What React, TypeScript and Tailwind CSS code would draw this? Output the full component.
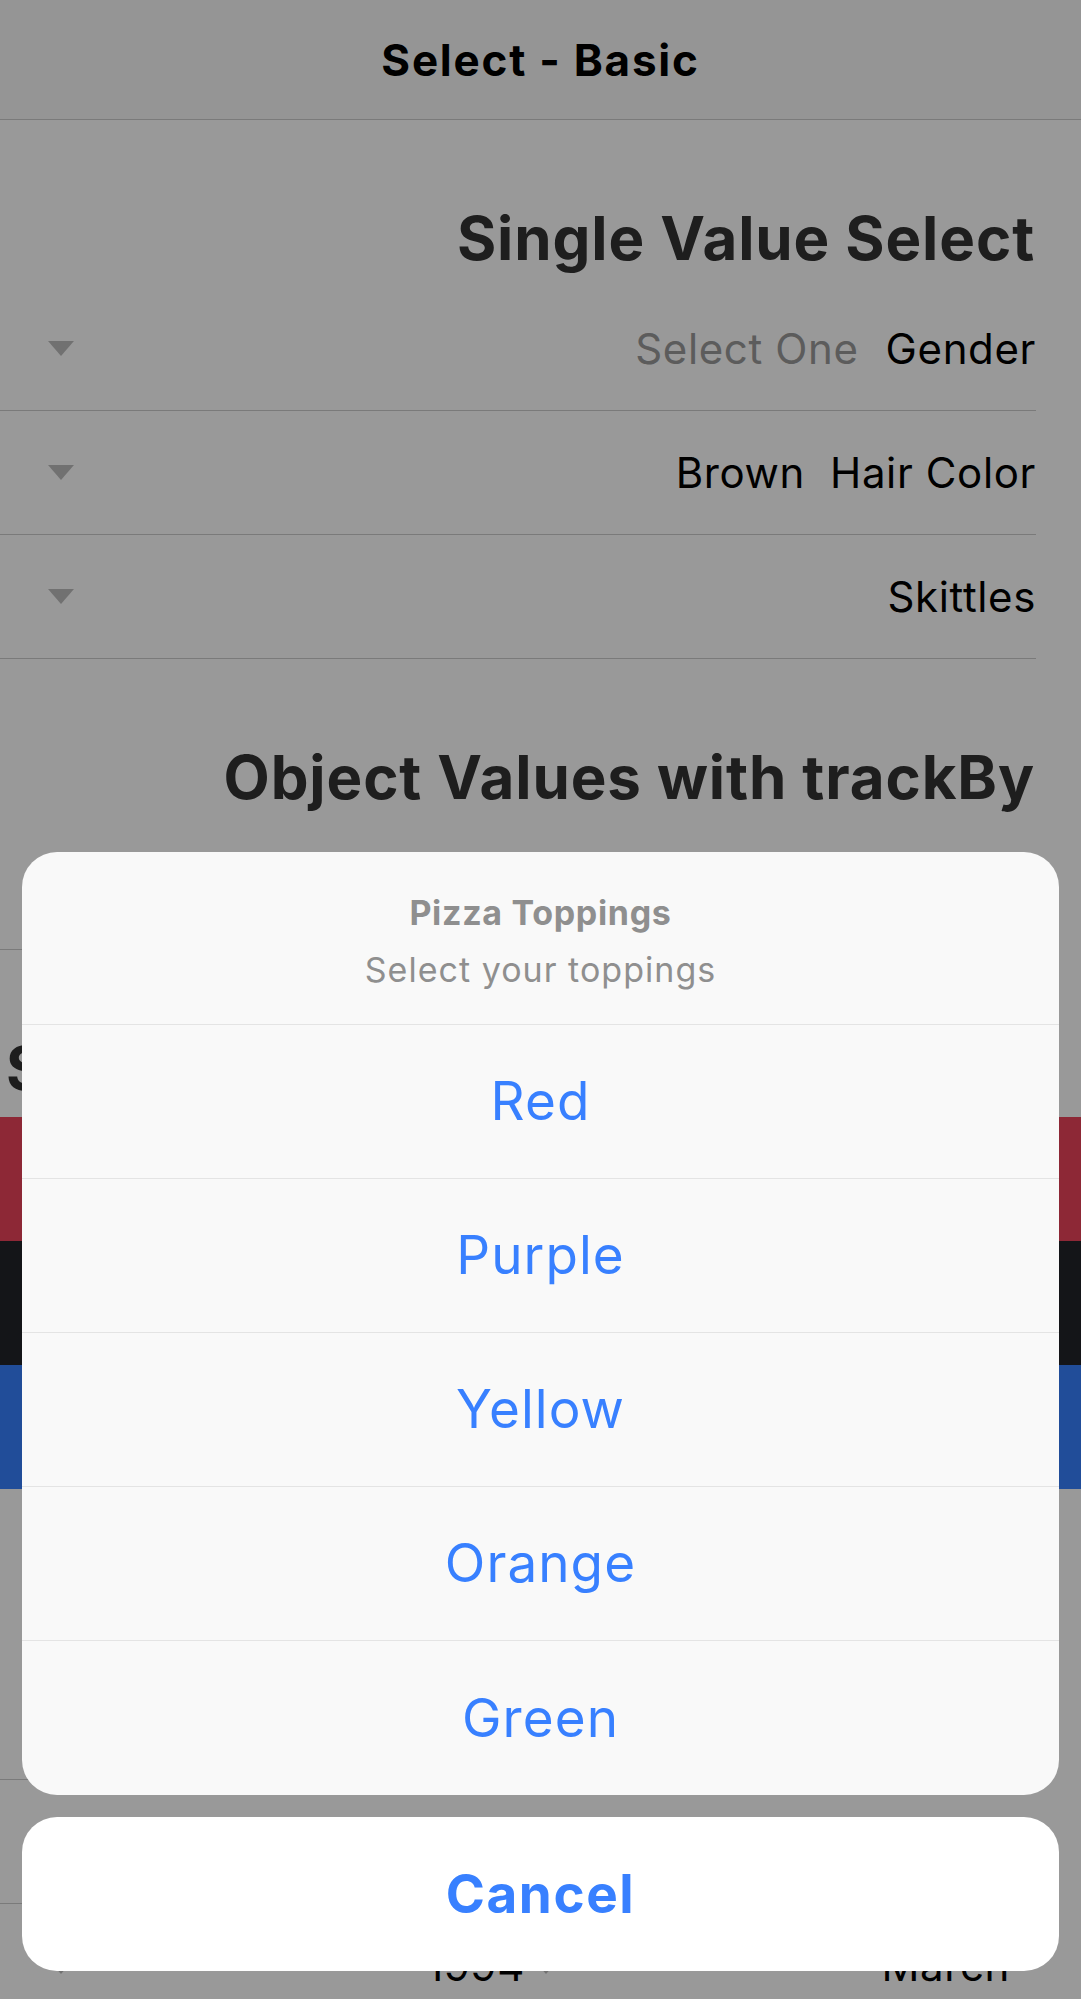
import React from "react";

type RowProps = {
  label: string;
  value?: string;
  placeholder?: string;
};

function Caret({ color = "#bdbdbd" }: { color?: string }) {
  return (
    <svg width="26" height="15" viewBox="0 0 26 15" className="shrink-0">
      <polygon points="0,0 26,0 13,15" fill={color} />
    </svg>
  );
}

function SectionHeading({ children }: { children: React.ReactNode }) {
  return (
    <div className="h-[167px] ps-[46px] pt-[88px]">
      <h2 className="whitespace-nowrap text-[60px] font-bold leading-none tracking-[0.015em] text-[#333333]">
        {children}
      </h2>
    </div>
  );
}

function SelectRow({ label, value, placeholder }: RowProps) {
  return (
    <div className="ps-[45px]">
      <div className="flex h-[124px] items-center border-b border-[#cccccc] pe-[48px] text-[42px] leading-none tracking-[0.015em]">
        <span className="text-black">{label}</span>
        {value ? (
          <span className="ms-[25px] text-black">{value}</span>
        ) : placeholder ? (
          <span className="ms-[27px] text-[#999999]">{placeholder}</span>
        ) : null}
        <span className="flex-1" />
        <Caret />
      </div>
    </div>
  );
}

function ColorRow({ label, value, bg }: { label: string; value: string; bg: string }) {
  return (
    <div className={`flex h-[124px] items-center ps-[45px] pe-[48px] text-[42px] leading-none text-white ${bg}`}>
      <span>{label}</span>
      <span className="ms-[25px]">{value}</span>
      <span className="flex-1" />
      <Caret color="#ffffff" />
    </div>
  );
}

const toppings = ["Red", "Purple", "Yellow", "Orange", "Green"];

export default function App() {
  return (
    <div className="relative h-[1999px] w-full overflow-hidden bg-white font-[Inter,sans-serif]">
      <header className="flex h-[120px] items-center justify-center border-b border-[#cccccc] bg-[#f8f8f8]">
        <h1 className="text-[44px] font-bold leading-none tracking-[0.04em] text-black">Select - Basic</h1>
      </header>

      <main dir="rtl">
        <SectionHeading>Single Value Select</SectionHeading>
        <SelectRow label="Gender" placeholder="Select One" />
        <SelectRow label="Hair Color" value="Brown" />
        <SelectRow label="Skittles" />

        <SectionHeading>Object Values with trackBy</SectionHeading>
        <SelectRow label="Users" value="Alice" />

        <div dir="ltr" className="h-[167px] ps-[6px] pt-[88px]">
          <h2 className="whitespace-nowrap text-[60px] font-bold leading-none tracking-[0.015em] text-[#333333]">
            Select with Custom Colors
          </h2>
        </div>
        <ColorRow label="Danger" value="Pepperoni" bg="bg-[#eb445a]" />
        <ColorRow label="Dark" value="Bacon" bg="bg-[#222428]" />
        <ColorRow label="Primary" value="Olives" bg="bg-[#3880ff]" />

        <SectionHeading>Date Selects</SectionHeading>
        <SelectRow label="Notifications" value="Enable" />
        <SelectRow label="Music" value="Alternative" />
        <div className="flex h-[124px] items-center ps-[45px] pe-[48px] text-[42px] leading-none tracking-[0.015em] text-black">
          <div className="flex flex-1 items-center ps-[26px]">
            <span>March</span>
            <span className="flex-1" />
            <Caret />
          </div>
          <div className="flex flex-1 items-center ps-[8px]">
            <span>1994</span>
            <span className="flex-1" />
            <Caret />
          </div>
        </div>
      </main>

      {/* action sheet over a dimmed backdrop */}
      <div className="absolute inset-0 flex flex-col justify-end bg-[rgba(0,0,0,0.4)] px-[22px] pb-[28px]">
        <div className="overflow-hidden rounded-[35px] bg-[#f9f9f9]">
          <div className="flex h-[173px] flex-col items-center border-b border-[#e4e4e4] pt-[44px]">
            <div className="text-[34px] font-bold leading-none tracking-[0.02em] text-[#8f8f8f]">Pizza Toppings</div>
            <div className="mt-[23px] text-[34px] leading-none tracking-[0.03em] text-[#8f8f8f]">Select your toppings</div>
          </div>
          {toppings.map((t, i) => (
            <button
              key={t}
              type="button"
              className={`flex h-[154px] w-full items-center justify-center text-[53px] leading-none tracking-[0.02em] text-[#3880ff] ${
                i < toppings.length - 1 ? "border-b border-[#e4e4e4]" : ""
              }`}
            >
              {t}
            </button>
          ))}
        </div>
        <button
          type="button"
          className="mt-[22px] flex h-[154px] w-full items-center justify-center rounded-[35px] bg-white text-[53px] font-bold leading-none tracking-[0.03em] text-[#3880ff]"
        >
          Cancel
        </button>
      </div>
    </div>
  );
}
